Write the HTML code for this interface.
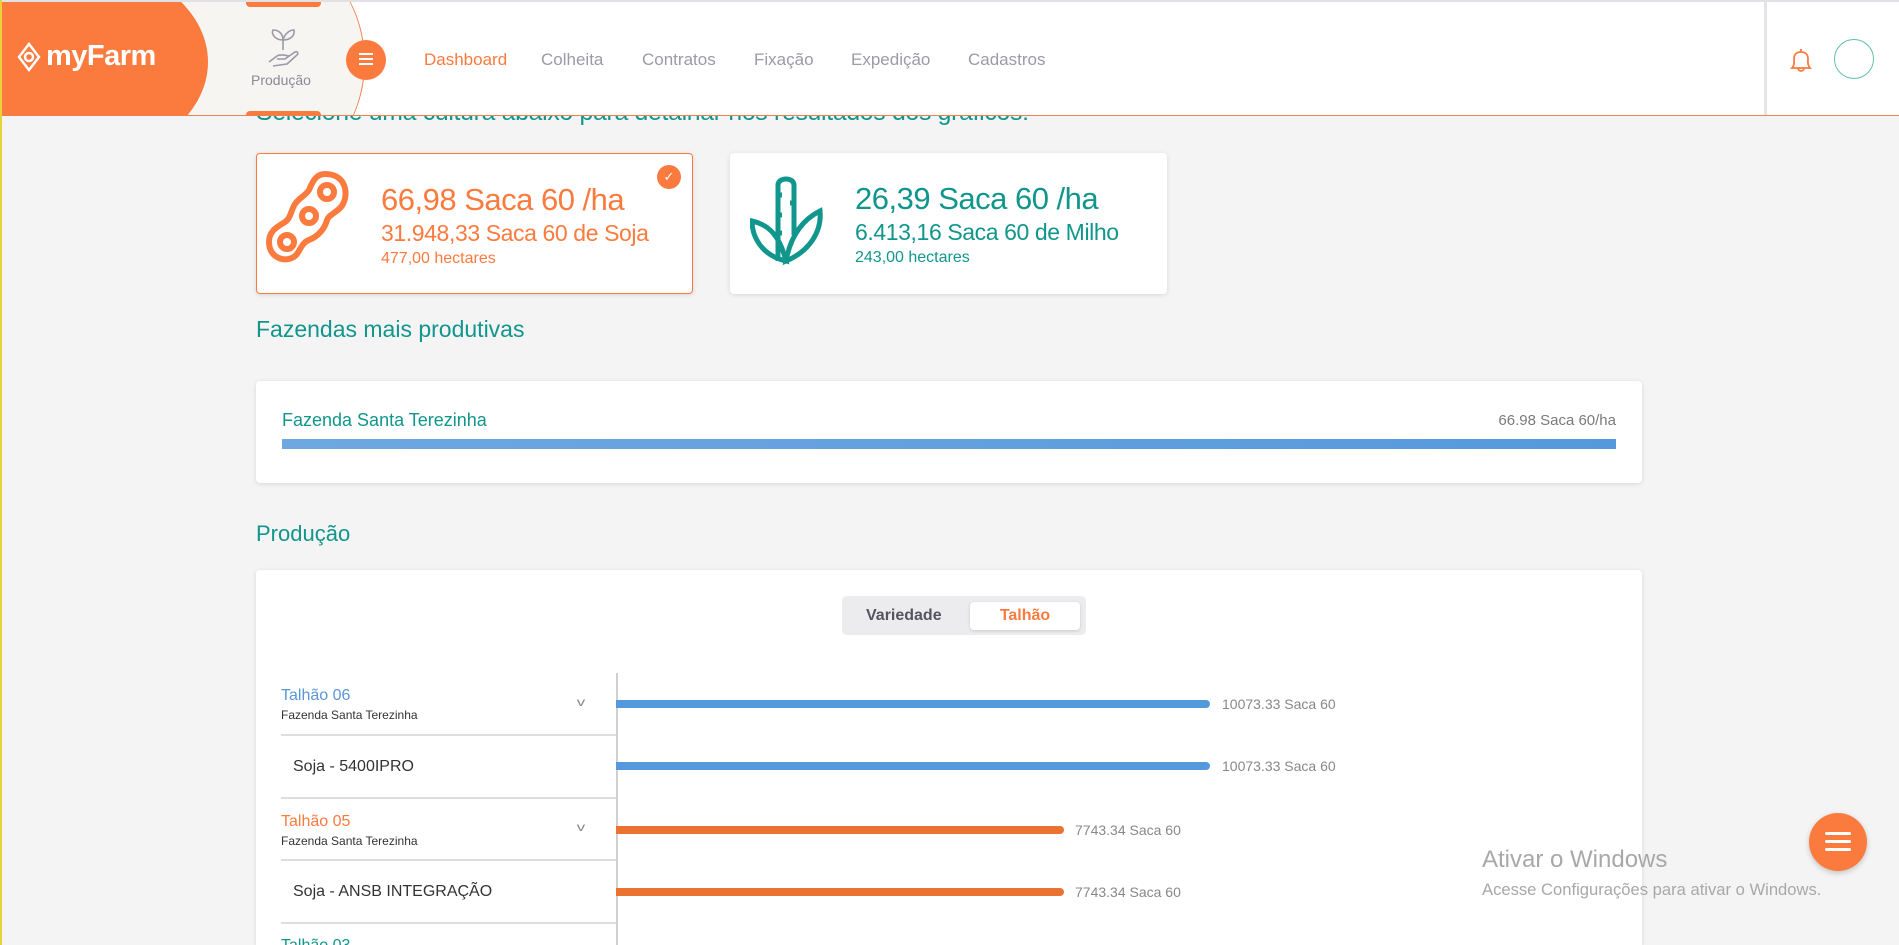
<!DOCTYPE html>
<html style="overflow:hidden;height:945px"><head><meta charset="utf-8">
<style>
*{box-sizing:border-box;margin:0;padding:0}
body{width:1899px;height:945px;overflow:hidden;background:#f4f4f4;font-family:"Liberation Sans",sans-serif;position:relative}
.abs{position:absolute}
.teal{color:#10968c}
.or{color:#fb7a3e}
.card{position:absolute;background:#fff;border-radius:4px;box-shadow:0 1px 5px rgba(0,0,0,.12)}
</style></head><body>
<div class="abs" style="left:0;top:0;width:2px;height:945px;background:#e8d33a;z-index:5"></div>

<div class="abs teal" style="left:256px;top:99px;font-size:24.8px;letter-spacing:-0.3px">Selecione uma cultura abaixo para detalhar nos resultados dos gráficos:</div>

<div class="abs" style="left:0;top:0;width:1899px;height:116px;background:#fff;border-top:2px solid #e2e2e6;border-bottom:1.5px solid #f08050;overflow:hidden">
  <div class="abs" style="left:150px;top:-60px;width:215px;height:240px;border-radius:50%;background:#f7f5f2;border-right:1.5px solid #f08050"></div>
  <div class="abs" style="left:246px;top:-2px;width:75px;height:7px;background:#fb7a3e;border-radius:0 0 4px 4px"></div>
  <div class="abs" style="left:246px;top:109px;width:75px;height:8px;background:#fb7a3e;border-radius:4px 4px 0 0"></div>
  <div class="abs" style="left:-60px;top:-40px;width:268px;height:200px;border-radius:0 50% 50% 0/0 50% 50% 0;background:#fb7a3e"></div>
  <div class="abs" style="left:16px;top:38px;color:#fff;font-size:29px;font-weight:bold;letter-spacing:-0.5px;display:flex;align-items:center">
    <svg width="26" height="30" viewBox="0 0 26 30" style="margin-right:4px"><path d="M13 2 L23 15 L13 28 L3 15 Z" fill="none" stroke="#fff" stroke-width="2.5"/><circle cx="13" cy="15" r="4" fill="none" stroke="#fff" stroke-width="2.5"/></svg>myFarm</div>
  <svg class="abs" style="left:265px;top:26px" width="36" height="42" viewBox="0 0 36 42" fill="none" stroke="#9a9aa8" stroke-width="1.6"><path d="M18 22 V12 M18 12 C10 12 6 6 8 2 C14 2 18 6 18 12 M18 12 C20 5 25 2 29 2 C30 8 25 12 18 12"/><path d="M4 34 L12 28 C15 26 20 27 24 28 L20 31 L12 31 M20 31 L30 24 C32 23 34 25 32 27 L22 36 L8 38"/></svg>
  <div class="abs" style="left:251px;top:70px;font-size:14px;color:#8a8a98">Produção</div>
  <div class="abs" style="left:346px;top:38px;width:40px;height:40px;border-radius:50%;background:#fb7a3e"></div>
  <div class="abs" style="left:359px;top:51px;width:14px;height:2px;background:#fff;box-shadow:0 5px 0 #fff,0 10px 0 #fff"></div>
  <div class="abs" style="left:424px;top:48px;font-size:17px;color:#fb7a3e">Dashboard</div>
  <div class="abs" style="left:541px;top:48px;font-size:17px;color:#9a9aa8">Colheita</div>
  <div class="abs" style="left:642px;top:48px;font-size:17px;color:#9a9aa8">Contratos</div>
  <div class="abs" style="left:754px;top:48px;font-size:17px;color:#9a9aa8">Fixação</div>
  <div class="abs" style="left:851px;top:48px;font-size:17px;color:#9a9aa8">Expedição</div>
  <div class="abs" style="left:968px;top:48px;font-size:17px;color:#9a9aa8">Cadastros</div>
  <div class="abs" style="left:1764px;top:0;width:3px;height:116px;background:#e4e4e8"></div>
  <svg class="abs" style="left:1786px;top:44px" width="30" height="30" viewBox="0 0 30 30" fill="none" stroke="#fb7a3e" stroke-width="1.8"><path d="M15 3 V6 M6 22 C9 19 8 15 8 13 C8 8 11 6 15 6 C19 6 22 8 22 13 C22 15 21 19 24 22 Z M12 22 C12 26 18 26 18 22"/></svg>
  <div class="abs" style="left:1834px;top:37px;width:40px;height:40px;border-radius:50%;border:1.5px solid #5fc0a8"></div>
</div>

<div class="card" style="left:256px;top:153px;width:437px;height:141px;border:1.5px solid #fb7a3e">
  <svg class="abs" style="left:8px;top:16px" width="92" height="95" viewBox="0 0 92 95" fill="none" stroke="#fb7a3e" stroke-width="6"><path d="M60 4 C80 4 84 22 78 34 C74 42 64 44 62 50 C60 58 54 66 44 70 C38 72 36 78 32 84 C24 94 4 90 4 72 C4 60 14 56 20 52 C26 48 26 40 30 34 C34 28 40 26 44 20 C48 10 52 4 60 4 Z"/><circle cx="62" cy="22" r="7"/><circle cx="44" cy="46" r="7"/><circle cx="22" cy="72" r="7"/></svg>
  <div class="abs" style="left:124px;top:28px;font-size:31px;color:#fb7a3e;letter-spacing:-0.5px">66,98 Saca 60 /ha</div>
  <div class="abs" style="left:124px;top:66px;font-size:23px;color:#fb7a3e;letter-spacing:-0.4px">31.948,33 Saca 60 de Soja</div>
  <div class="abs" style="left:124px;top:96px;font-size:16px;color:#fb7a3e">477,00 hectares</div>
  <div class="abs" style="left:400px;top:11px;width:24px;height:24px;border-radius:50%;background:#fb7a3e;color:#fff;font-size:13px;text-align:center;line-height:24px">✓</div>
</div>
<div class="card" style="left:730px;top:153px;width:437px;height:141px">
  <svg class="abs" style="left:20px;top:22px" width="76" height="92" viewBox="0 0 76 92" fill="none" stroke="#10968c" stroke-width="5"><path d="M28 86 V10 C28 2 44 2 44 10 V60"/><path d="M28 20 h4 M28 40 h4 M28 58 h4 M44 28 h-4"/><path d="M36 86 C10 80 2 60 2 46 C20 50 30 62 36 86 Z"/><path d="M36 86 C60 76 72 56 70 36 C50 46 40 64 36 86 Z"/></svg>
  <div class="abs" style="left:125px;top:28px;font-size:31px;color:#10968c;letter-spacing:-0.5px">26,39 Saca 60 /ha</div>
  <div class="abs" style="left:125px;top:66px;font-size:23px;color:#10968c;letter-spacing:-0.4px">6.413,16 Saca 60 de Milho</div>
  <div class="abs" style="left:125px;top:96px;font-size:16px;color:#10968c">243,00 hectares</div>
</div>

<div class="abs teal" style="left:256px;top:316px;font-size:23px">Fazendas mais produtivas</div>
<div class="card" style="left:256px;top:381px;width:1386px;height:102px">
  <div class="abs teal" style="left:26px;top:29px;font-size:18px">Fazenda Santa Terezinha</div>
  <div class="abs" style="right:26px;top:31px;font-size:15px;color:#7a7a7a">66.98 Saca 60/ha</div>
  <div class="abs" style="left:26px;top:58px;width:1334px;height:10px;background:linear-gradient(90deg,#6fa8e0,#5599dd)"></div>
</div>

<div class="abs teal" style="left:256px;top:521px;font-size:22px">Produção</div>
<div class="card" style="left:256px;top:570px;width:1386px;height:375px;border-radius:4px 4px 0 0">
  <div class="abs" style="left:586px;top:26px;width:244px;height:39px;background:#ececee;border-radius:5px"></div>
  <div class="abs" style="left:610px;top:37px;font-size:16px;font-weight:bold;color:#555560">Variedade</div>
  <div class="abs" style="left:714px;top:32px;width:110px;height:28px;background:#fff;border-radius:4px;box-shadow:0 1px 3px rgba(0,0,0,.15);text-align:center;line-height:28px;font-size:16px;font-weight:bold;color:#fb7a3e">Talhão</div>
  <div class="abs" style="left:360px;top:103px;width:2px;height:280px;background:#d0d0d0"></div>

  <div class="abs" style="left:25px;top:117px;font-size:16px;color:#5a96d8">Talhão 06</div>
  <div class="abs" style="left:25px;top:138px;font-size:12px;color:#333">Fazenda Santa Terezinha</div>
  <div class="abs" style="left:322px;top:125px;font-size:12px;color:#888;transform:scaleX(1.4)">v</div>
  <div class="abs" style="left:25px;top:164px;width:335px;height:2px;background:#ddd"></div>
  <div class="abs" style="left:37px;top:188px;font-size:16px;color:#333">Soja - 5400IPRO</div>
  <div class="abs" style="left:25px;top:227px;width:335px;height:2px;background:#ddd"></div>
  <div class="abs" style="left:25px;top:243px;font-size:16px;color:#fb7a3e">Talhão 05</div>
  <div class="abs" style="left:25px;top:264px;font-size:12px;color:#333">Fazenda Santa Terezinha</div>
  <div class="abs" style="left:322px;top:250px;font-size:12px;color:#888;transform:scaleX(1.4)">v</div>
  <div class="abs" style="left:25px;top:289px;width:335px;height:2px;background:#ddd"></div>
  <div class="abs" style="left:37px;top:313px;font-size:16px;color:#333">Soja - ANSB INTEGRAÇÃO</div>
  <div class="abs" style="left:25px;top:352px;width:335px;height:2px;background:#ddd"></div>
  <div class="abs" style="left:25px;top:367px;font-size:16px;color:#10968c">Talhão 03</div>

  <div class="abs" style="left:360px;top:130px;width:594px;height:8px;background:#5599dd;border-radius:0 4px 4px 0"></div>
  <div class="abs" style="left:966px;top:126px;font-size:14px;color:#888">10073.33 Saca 60</div>
  <div class="abs" style="left:360px;top:192px;width:594px;height:8px;background:#5599dd;border-radius:0 4px 4px 0"></div>
  <div class="abs" style="left:966px;top:188px;font-size:14px;color:#888">10073.33 Saca 60</div>
  <div class="abs" style="left:360px;top:256px;width:448px;height:8px;background:#ea7332;border-radius:0 4px 4px 0"></div>
  <div class="abs" style="left:819px;top:252px;font-size:14px;color:#888">7743.34 Saca 60</div>
  <div class="abs" style="left:360px;top:318px;width:448px;height:8px;background:#ea7332;border-radius:0 4px 4px 0"></div>
  <div class="abs" style="left:819px;top:314px;font-size:14px;color:#888">7743.34 Saca 60</div>
</div>

<div class="abs" style="left:1482px;top:846px;font-size:24px;color:#a8a8a8">Ativar o Windows</div>
<div class="abs" style="left:1482px;top:880px;font-size:16.6px;color:#a8a8a8">Acesse Configurações para ativar o Windows.</div>
<div class="abs" style="left:1809px;top:813px;width:58px;height:58px;border-radius:50%;background:#fb7a3e;box-shadow:0 2px 6px rgba(0,0,0,.2)"></div>
<div class="abs" style="left:1825px;top:832px;width:26px;height:3px;background:#fff;box-shadow:0 8px 0 #fff,0 16px 0 #fff;border-radius:2px"></div>
</body></html>
